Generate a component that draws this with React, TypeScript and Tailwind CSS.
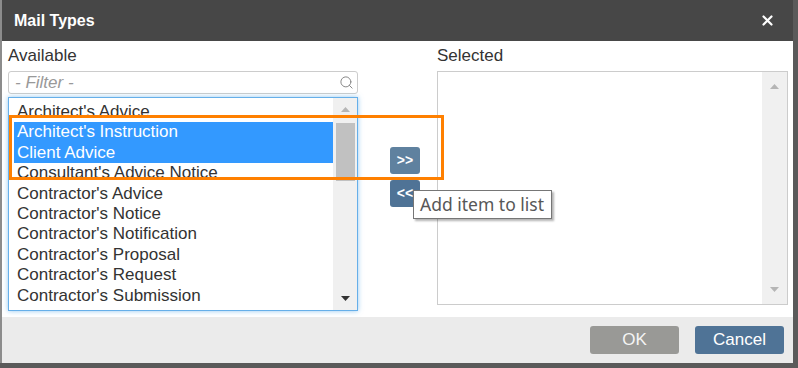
import { Search } from "lucide-react";

const available = [
  { label: "Architect's Advice", selected: false },
  { label: "Architect's Instruction", selected: true },
  { label: "Client Advice", selected: true },
  { label: "Consultant's Advice Notice", selected: false },
  { label: "Contractor's Advice", selected: false },
  { label: "Contractor's Notice", selected: false },
  { label: "Contractor's Notification", selected: false },
  { label: "Contractor's Proposal", selected: false },
  { label: "Contractor's Request", selected: false },
  { label: "Contractor's Submission", selected: false },
];

function Arrow({ up, color }: { up?: boolean; color: string }) {
  return (
    <svg width="9" height="5" viewBox="0 0 9 5">
      <path d={up ? "M0 5L4.5 0L9 5Z" : "M0 0L4.5 5L9 0Z"} fill={color} />
    </svg>
  );
}

export default function App() {
  return (
    <div className="w-[798px] h-[368px] bg-[#5a5a5a] font-['Liberation_Sans',Arial,sans-serif] relative overflow-hidden">
      <div className="flex flex-col w-[793px] h-[363px] border-l-2 border-[#8c8c8c] bg-white">
        {/* Title bar */}
        <div className="h-[41px] shrink-0 bg-[#474747] flex items-center justify-between pl-[12px] pr-[20px]">
          <span className="text-[16px] font-bold text-white">Mail Types</span>
          <svg width="11" height="11" viewBox="0 0 11 11">
            <path d="M1.5 1.5L9.5 9.5M9.5 1.5L1.5 9.5" stroke="white" strokeWidth="2.2" strokeLinecap="round" />
          </svg>
        </div>

        {/* Body */}
        <div className="flex-1 flex pt-[6px] pl-[6px]">
          {/* Available */}
          <div className="w-[350px] flex flex-col">
            <div className="text-[17px] leading-[18px] text-[#333]">Available</div>
            <div className="mt-[6px] h-[23px] border border-[#cccccc] rounded-[3px] flex items-center pl-[6px] pr-[3px]">
              <span className="flex-1 italic text-[17px] text-[#999]">- Filter -</span>
              <Search className="w-[15px] h-[15px] text-[#888]" strokeWidth={1.6} />
            </div>
            <div className="mt-[3px] h-[214px] border border-[#66afe9] shadow-[0_0_5px_rgba(102,175,233,0.7)] flex overflow-hidden">
              <div className="flex-1 pl-[5px] pt-[4px] overflow-hidden">
                {available.map((item) => (
                  <div
                    key={item.label}
                    className={
                      item.selected
                        ? "h-[20.4px] leading-[20.4px] pl-[3px] text-[17px] whitespace-nowrap bg-[#3399ff] text-white"
                        : "h-[20.4px] leading-[20.4px] pl-[3px] text-[17px] whitespace-nowrap text-[#333]"
                    }
                  >
                    {item.label}
                  </div>
                ))}
              </div>
              <div className="w-[24px] bg-[#f0f0f0] flex flex-col items-center justify-between py-[9px] relative">
                <Arrow up color="#b5b5b5" />
                <div className="absolute left-[3px] top-[25px] w-[19px] h-[58px] bg-[#c1c1c1]" />
                <Arrow color="#333333" />
              </div>
            </div>
          </div>

          {/* Move buttons */}
          <div className="w-[79px] flex flex-col pl-[32px] pt-[100px] gap-[6px]">
            <div className="w-[30px] h-[27px] rounded-[3px] bg-[#5f819f] flex items-center justify-center text-white text-[14px] font-bold">
              &gt;&gt;
            </div>
            <div className="w-[30px] h-[27px] rounded-[3px] bg-[#4f7396] flex items-center justify-center text-white text-[14px] font-bold">
              &lt;&lt;
            </div>
          </div>

          {/* Selected */}
          <div className="w-[351px] flex flex-col">
            <div className="text-[17px] leading-[18px] text-[#333]">Selected</div>
            <div className="mt-[6px] h-[234px] border border-[#cccccc] flex">
              <div className="flex-1" />
              <div className="w-[25px] bg-[#f0f0f0] flex flex-col items-center justify-between py-[12px]">
                <Arrow up color="#b5b5b5" />
                <Arrow color="#b5b5b5" />
              </div>
            </div>
          </div>
        </div>

        {/* Footer */}
        <div className="h-[46px] shrink-0 bg-[#ebebeb] flex items-center justify-end gap-[16px] pr-[9px]">
          <div className="w-[89px] h-[28px] rounded-[3px] bg-[#999996] text-[#f4f4f4] text-[17px] flex items-center justify-center">
            OK
          </div>
          <div className="w-[89px] h-[28px] rounded-[3px] bg-[#4f7396] text-white text-[17px] flex items-center justify-center">
            Cancel
          </div>
        </div>
      </div>

      {/* Annotation highlight */}
      <div className="absolute left-[9px] top-[115px] w-[435px] h-[65px] border-[3px] border-[#ff8000]" />

      {/* Tooltip */}
      <div className="absolute left-[413px] top-[190px] w-[139px] h-[29px] pl-[6px] bg-white border border-[#767676] shadow-[2px_2px_2px_rgba(0,0,0,0.3)] flex items-center text-[17.5px] text-[#575757] font-['Noto_Sans',sans-serif]">
        Add item to list
      </div>
    </div>
  );
}
